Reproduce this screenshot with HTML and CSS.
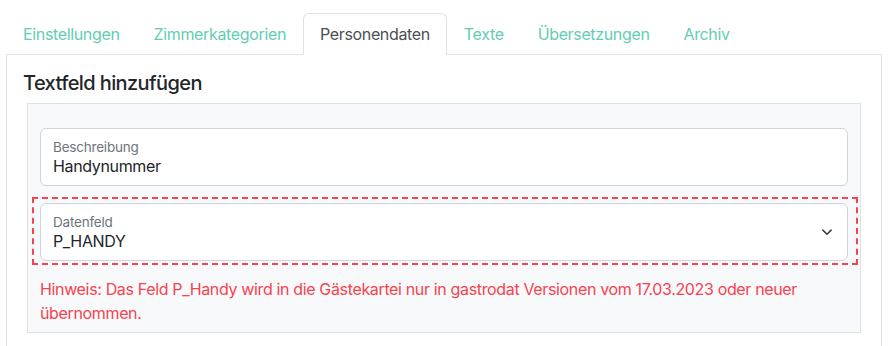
FILE: index.html
```html
<!DOCTYPE html>
<html lang="de">
<head>
    <meta charset="UTF-8">
    <meta name="viewport" content="width=device-width, initial-scale=1.0">
    <title>Personendaten</title>
    <link rel="stylesheet" href="styles.css">
</head>
<body>
    <div class="page">
        <ul class="tabs">
            <li><a class="tab" href="#">Einstellungen</a></li>
            <li><a class="tab" href="#">Zimmerkategorien</a></li>
            <li><a class="tab active" href="#">Personendaten</a></li>
            <li><a class="tab" href="#">Texte</a></li>
            <li><a class="tab" href="#">Übersetzungen</a></li>
            <li><a class="tab" href="#">Archiv</a></li>
        </ul>

        <div class="tab-content">
            <h2>Textfeld hinzufügen</h2>
            <div class="field-box">
                <div class="floating">
                    <label for="beschreibung">Beschreibung</label>
                    <input type="text" id="beschreibung" value="Handynummer">
                </div>

                <div class="highlight">
                    <div class="floating select">
                        <label for="datenfeld">Datenfeld</label>
                        <div class="select-value" id="datenfeld">P_HANDY</div>
                        <svg class="chevron" width="16" height="12" viewBox="0 0 16 16">
                            <path d="M2.5 5.5l5.5 5.5 5.5-5.5" fill="none" stroke="#343a40" stroke-width="2" stroke-linecap="round" stroke-linejoin="round"/>
                        </svg>
                    </div>
                </div>

                <p class="hint">Hinweis: Das Feld P_Handy wird in die Gästekartei nur in gastrodat Versionen vom 17.03.2023 oder neuer übernommen.</p>
            </div>
        </div>
    </div>
</body>
</html>
```

FILE: styles.css
```css
* {
    box-sizing: border-box;
}
body {
    margin: 0;
    font-family: Inter, "Noto Sans", sans-serif;
    font-size: 16px;
    letter-spacing: -0.35px;
    color: #212529;
    background: #fff;
}
.page {
    padding: 13px 9px 0 6px;
}
.tabs {
    display: flex;
    list-style: none;
    margin: 0;
    padding: 0;
}
.tab {
    display: block;
    padding: 8px 16px;
    line-height: 24px;
    border: 1px solid transparent;
    border-radius: 6px 6px 0 0;
    color: #63cdb3;
    text-decoration: none;
    margin-bottom: -1px;
}
.tab.active {
    color: #495057;
    background: #fff;
    border-color: #dee2e6 #dee2e6 #fff;
    position: relative;
}
.tab-content {
    border: 1px solid #dee2e6;
    padding: 16px 16px 0;
    height: 300px;
}
h2 {
    margin: 0 0 8px;
    font-size: 20px;
    font-weight: 500;
    line-height: 24px;
    letter-spacing: -0.6px;
}
.field-box {
    margin: 0 4px;
    padding: 24px 12px 7px;
    background: #f8f9fa;
    border: 1px solid #dee2e6;
}
.floating {
    position: relative;
    display: flex;
    flex-direction: column;
    height: 58px;
    padding: 9px 12px;
    background: #fff;
    border: 1px solid #ced4da;
    border-radius: 6px;
}
.floating label {
    font-size: 13.5px;
    line-height: 18px;
    letter-spacing: -0.2px;
    color: #6c757d;
}
.floating input,
.select-value {
    border: 0;
    padding: 0;
    margin: 0;
    font: inherit;
    letter-spacing: inherit;
    line-height: 20px;
    color: #212529;
    outline: none;
    background: transparent;
}
.highlight {
    margin-top: 11px;
    padding: 4px 8px 2px 6px;
    margin-left: -8px;
    margin-right: -10px;
    border: 2px dashed #f5444f;
}
.select {
    padding-right: 40px;
}
.chevron {
    position: absolute;
    right: 12px;
    top: 22px;
}
.hint {
    margin: 12px 0 0;
    color: #f5434f;
    line-height: 24px;
}
```
